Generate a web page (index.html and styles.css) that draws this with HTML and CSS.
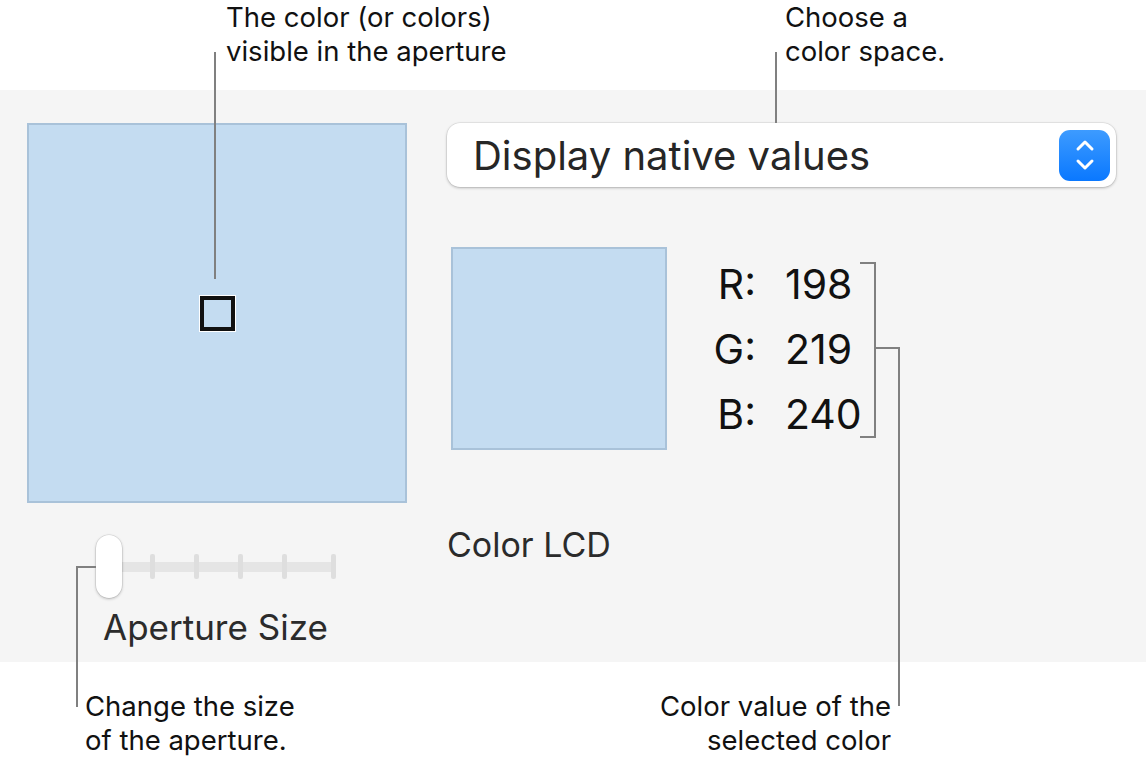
FILE: index.html
```html
<!DOCTYPE html>
<html lang="en">
<head>
  <meta charset="UTF-8">
  <title>Color Meter</title>
  <link rel="stylesheet" href="styles.css">
</head>
<body>
  <div class="figure">
    <div class="notes-top">
      <p class="note note-aperture">The color (or colors)<br>visible in the aperture</p>
      <p class="note note-space">Choose a<br>color space.</p>
    </div>

    <div class="panel">
      <div class="col-left">
        <div class="swatch-big">
          <div class="aperture-box"></div>
        </div>
        <div class="slider">
          <div class="track">
            <span class="tick"></span>
            <span class="tick"></span>
            <span class="tick"></span>
            <span class="tick"></span>
            <span class="tick tick-end"></span>
          </div>
          <div class="knob"></div>
        </div>
        <div class="slider-label">Aperture Size</div>
      </div>

      <div class="col-right">
        <div class="popup">
          <span class="popup-text">Display native values</span>
          <span class="stepper">
            <svg width="22" height="34" viewBox="0 0 22 34">
              <path d="M4 11 L11 4 L18 11" fill="none" stroke="#fff" stroke-width="3" stroke-linecap="round" stroke-linejoin="round"/>
              <path d="M4 23 L11 30 L18 23" fill="none" stroke="#fff" stroke-width="3" stroke-linecap="round" stroke-linejoin="round"/>
            </svg>
          </span>
        </div>

        <div class="readout">
          <div class="swatch-small"></div>
          <div class="values">
            <span class="lbl">R:</span><span class="val">198</span>
            <span class="lbl">G:</span><span class="val">219</span>
            <span class="lbl">B:</span><span class="val">240</span>
          </div>
        </div>

        <div class="display-name">Color LCD</div>
      </div>
    </div>

    <div class="notes-bottom">
      <p class="note note-size">Change the size<br>of the aperture.</p>
      <p class="note note-value">Color value of the<br>selected color</p>
    </div>

    <!-- leader lines for the callouts -->
    <svg class="leaders" width="1146" height="762" viewBox="0 0 1146 762">
      <g fill="none" stroke="#808080" stroke-width="2">
        <path d="M215 52 V279"/>
        <path d="M776 52 V123"/>
        <path d="M860 263 H875 V437 H860"/>
        <path d="M875 348 H899 V706"/>
        <path d="M96 567 H77 V707"/>
      </g>
    </svg>
  </div>
</body>
</html>
```

FILE: styles.css
```css
body {
  margin: 0;
  background-color: #ffffff;
  font-family: "Inter", "Liberation Sans", sans-serif;
  color: #1d1d1f;
}

.figure {
  position: relative;
  width: 1146px;
  height: 762px;
  overflow: hidden;
}

/* callout texts */
.note {
  margin: 0;
  font-size: 27.5px;
  line-height: 34px;
  color: #111;
}

.notes-top {
  height: 90px;
  box-sizing: border-box;
  padding-left: 226px;
  display: grid;
  grid-template-columns: 559px 1fr;
  align-items: start;
}

.notes-bottom {
  display: flex;
  padding-top: 27px;
}

.note-size {
  margin-left: 85px;
}

.note-value {
  margin-left: auto;
  margin-right: 255px;
  text-align: right;
}

/* the window panel */
.panel {
  height: 572px;
  box-sizing: border-box;
  background-color: #f5f5f5;
  display: flex;
  padding: 33px 0 0 27px;
}

.col-left {
  width: 380px;
}

.swatch-big {
  width: 380px;
  height: 380px;
  box-sizing: border-box;
  background-color: #c4dcf1;
  border: 2px solid #a9c2d9;
  display: flex;
  justify-content: center;
  align-items: center;
}

.aperture-box {
  width: 27px;
  height: 27px;
  border: 4px solid #111;
  box-shadow: 0 0 0 1px #ffffff;
}

.slider {
  position: relative;
  margin: 32px 0 0 69px;
  width: 240px;
  height: 63px;
  display: flex;
  align-items: center;
}

.track {
  margin-left: 12px;
  flex: 1;
  height: 10px;
  box-sizing: border-box;
  padding-left: 42px;
  background-color: #e5e5e5;
  border-radius: 5px;
  display: flex;
  align-items: center;
  gap: 39px;
}

.tick {
  width: 5px;
  height: 25px;
  border-radius: 2px;
  background-color: #dedede;
}

.tick-end {
  margin-left: auto;
}

.knob {
  position: absolute;
  left: 0;
  top: 0;
  width: 26px;
  height: 63px;
  border-radius: 13px;
  background-color: #ffffff;
  box-shadow: 0 0 0 0.5px rgba(0, 0, 0, 0.12), 0 1px 3px rgba(0, 0, 0, 0.25);
}

.slider-label {
  margin: 8px 0 0 76px;
  font-size: 35px;
  line-height: 42px;
  color: #2b2b2b;
}

.col-right {
  margin-left: 40px;
  width: 669px;
}

.popup {
  height: 64px;
  box-sizing: border-box;
  background-color: #ffffff;
  border-radius: 13px;
  box-shadow: 0 0 0 0.5px rgba(0, 0, 0, 0.1), 0 1px 3px rgba(0, 0, 0, 0.25);
  display: flex;
  align-items: center;
  padding: 0 6px 0 26px;
}

.popup-text {
  flex: 1;
  font-size: 40px;
  color: #262626;
}

.stepper {
  width: 51px;
  height: 51px;
  border-radius: 11px;
  background: linear-gradient(#3d9bff, #0a78ff);
  display: flex;
  justify-content: center;
  align-items: center;
}

.readout {
  display: flex;
  margin-top: 60px;
}

.swatch-small {
  margin-left: 4px;
  width: 216px;
  height: 203px;
  box-sizing: border-box;
  background-color: #c4dcf1;
  border: 2px solid #a9c2d9;
}

.values {
  margin: 4px 0 0 33px;
  display: grid;
  grid-template-columns: 56px auto;
  column-gap: 29px;
  grid-auto-rows: 65px;
  align-items: center;
  font-size: 41px;
  color: #111;
}

.lbl {
  text-align: right;
}

.display-name {
  margin-top: 74px;
  font-size: 34px;
  color: #2b2b2b;
}

.leaders {
  position: absolute;
  left: 0;
  top: 0;
}
```
